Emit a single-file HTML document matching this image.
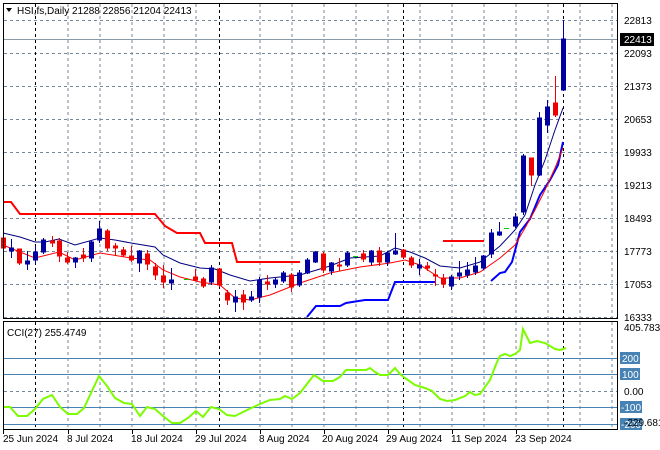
<!DOCTYPE html>
<html><head><meta charset="utf-8"><style>
body{margin:0;background:#fff;}
svg{display:block;font-family:"Liberation Sans",sans-serif;font-size:10px;}
</style></head><body>
<svg width="660" height="450" xmlns="http://www.w3.org/2000/svg">
<rect width="660" height="450" fill="#fff"/>
<g stroke="#778899" stroke-dasharray="3,3" stroke-width="1">
<line x1="68" y1="4" x2="68" y2="429"/><line x1="100" y1="4" x2="100" y2="429"/><line x1="132" y1="4" x2="132" y2="429"/><line x1="164" y1="4" x2="164" y2="429"/><line x1="196" y1="4" x2="196" y2="429"/><line x1="260" y1="4" x2="260" y2="429"/><line x1="292" y1="4" x2="292" y2="429"/><line x1="324" y1="4" x2="324" y2="429"/><line x1="356" y1="4" x2="356" y2="429"/><line x1="388" y1="4" x2="388" y2="429"/><line x1="420" y1="4" x2="420" y2="429"/><line x1="452" y1="4" x2="452" y2="429"/><line x1="484" y1="4" x2="484" y2="429"/><line x1="516" y1="4" x2="516" y2="429"/><line x1="548" y1="4" x2="548" y2="429"/><line x1="580" y1="4" x2="580" y2="429"/><line x1="612" y1="4" x2="612" y2="429"/>
<line x1="4" y1="20.5" x2="617" y2="20.5"/><line x1="4" y1="53.5" x2="617" y2="53.5"/><line x1="4" y1="86.5" x2="617" y2="86.5"/><line x1="4" y1="119.5" x2="617" y2="119.5"/><line x1="4" y1="152.5" x2="617" y2="152.5"/><line x1="4" y1="185.5" x2="617" y2="185.5"/><line x1="4" y1="218.5" x2="617" y2="218.5"/><line x1="4" y1="251.5" x2="617" y2="251.5"/><line x1="4" y1="284.5" x2="617" y2="284.5"/><line x1="4" y1="317.5" x2="617" y2="317.5"/>
<line x1="4" y1="391.5" x2="617" y2="391.5"/>
</g>
<g stroke="#000" stroke-dasharray="3,3" stroke-width="1">
<line x1="35.5" y1="4" x2="35.5" y2="429"/><line x1="219.5" y1="4" x2="219.5" y2="429"/><line x1="403.5" y1="4" x2="403.5" y2="429"/><line x1="563.5" y1="4" x2="563.5" y2="429"/>
</g>
<line x1="4" y1="39.5" x2="617" y2="39.5" stroke="#8a9aa8"/>
<g stroke="#4682b4" stroke-width="1">
<line x1="4" y1="358.5" x2="617" y2="358.5"/><line x1="4" y1="374.5" x2="617" y2="374.5"/><line x1="4" y1="407.5" x2="617" y2="407.5"/><line x1="4" y1="424.5" x2="617" y2="424.5"/>
</g>
<!-- step lines -->
<polyline fill="none" stroke="#f00" stroke-width="2" points="3,202 11,202 20,214 155,214 165,226 177,233 200,233 205,243 232,243 237,262 300,262"/>
<line x1="443" y1="241" x2="484" y2="241" stroke="#f00" stroke-width="2"/>
<polyline fill="none" stroke="#00f" stroke-width="2" points="307,317 316,306 340,306 346,303 365,300 388,300 395,282 435,282"/>
<polyline fill="none" stroke="#00f" stroke-width="2" points="491,281 500,273 505,272 512,262 520,232 530,219 540,195 550,180 558,165 563,142"/>
<!-- MAs -->
<polyline fill="none" stroke="#000080" stroke-width="1" points="3,233 20,237 35,242 45,242 59,239 75,245 100,238 115,240 131,243 155,247 163,255 180,263 200,268 215,269 230,275 250,281 270,278 300,275 330,266 350,258 380,256 395,248 410,252 425,258 440,266 460,268 480,262 500,246 515,230 525,215 535,185 545,160 555,130 563,108"/>
<polyline fill="none" stroke="#f00" stroke-width="1" points="3,245 20,252 35,258 59,252 75,260 100,253 131,258 150,260 163,270 180,277 200,282 220,285 235,298 250,300 270,295 300,283 330,273 360,267 390,263 405,260 420,265 440,278 460,278 480,272 500,258 515,245 525,228 535,210 545,190 555,168 563,148"/>
<!-- candles -->
<g id="c" stroke-width="1">
<g fill="#e00" stroke="#e00">
<rect x="1.5" y="238" width="4" height="10"/><line x1="19.5" y1="249" x2="19.5" y2="265"/><rect x="17.5" y="249" width="4" height="14"/>
<line x1="52.5" y1="236" x2="52.5" y2="247"/><rect x="50.5" y="241" width="4" height="2"/>
<line x1="59.5" y1="238" x2="59.5" y2="262"/><rect x="57.5" y="241" width="4" height="15"/>
<line x1="67.5" y1="252" x2="67.5" y2="264"/><rect x="65.5" y="258" width="4" height="4"/>
<line x1="83.5" y1="248" x2="83.5" y2="262"/><rect x="81.5" y="255" width="4" height="3"/>
<line x1="107.5" y1="229" x2="107.5" y2="251"/><rect x="105.5" y="231" width="4" height="17"/>
<line x1="115.5" y1="243" x2="115.5" y2="256"/><rect x="113.5" y="246" width="4" height="2"/>
<line x1="123.5" y1="247" x2="123.5" y2="257"/><rect x="121.5" y="250" width="4" height="5"/>
<line x1="131.5" y1="246" x2="131.5" y2="262"/><rect x="129.5" y="256" width="4" height="4"/>
<line x1="147.5" y1="250" x2="147.5" y2="270"/><rect x="145.5" y="254" width="4" height="10"/>
<line x1="155.5" y1="263" x2="155.5" y2="280"/><rect x="153.5" y="267" width="4" height="8"/>
<line x1="163.5" y1="265" x2="163.5" y2="288"/><rect x="161.5" y="276" width="4" height="6"/>
<line x1="195.5" y1="269" x2="195.5" y2="281"/><rect x="193.5" y="277" width="4" height="3"/>
<line x1="203.5" y1="277" x2="203.5" y2="288"/><rect x="201.5" y="279" width="4" height="7"/>
<line x1="219.5" y1="269" x2="219.5" y2="287"/><rect x="217.5" y="269" width="4" height="16"/>
<line x1="227.5" y1="290" x2="227.5" y2="305"/><rect x="225.5" y="293" width="4" height="7"/>
<line x1="243.5" y1="290" x2="243.5" y2="310"/><rect x="241.5" y="295" width="4" height="7"/>
<line x1="267.5" y1="275" x2="267.5" y2="290"/><rect x="265.5" y="282" width="4" height="2"/>
<line x1="291.5" y1="273" x2="291.5" y2="292"/><rect x="289.5" y="275" width="4" height="12"/>
<line x1="323.5" y1="252" x2="323.5" y2="273"/><rect x="321.5" y="254" width="4" height="16"/>
<line x1="339.5" y1="258" x2="339.5" y2="271"/><rect x="337.5" y="265" width="4" height="1"/>
<line x1="363.5" y1="250" x2="363.5" y2="262"/><rect x="361.5" y="254" width="4" height="5"/>
<line x1="379.5" y1="247" x2="379.5" y2="266"/><rect x="377.5" y="251" width="4" height="11"/>
<line x1="403.5" y1="249" x2="403.5" y2="258"/><rect x="401.5" y="250" width="4" height="7"/>
<line x1="411.5" y1="256" x2="411.5" y2="268"/><rect x="409.5" y="258" width="4" height="7"/>
<line x1="427.5" y1="262" x2="427.5" y2="271"/><rect x="425.5" y="266" width="4" height="2"/>
<line x1="435.5" y1="269" x2="435.5" y2="286"/><rect x="433.5" y="275" width="4" height="1"/>
<line x1="443.5" y1="274" x2="443.5" y2="288"/><rect x="441.5" y="278" width="4" height="6"/>
<line x1="531.5" y1="158" x2="531.5" y2="186"/><rect x="529.5" y="158" width="4" height="17"/>
<line x1="555.5" y1="76" x2="555.5" y2="117"/><rect x="553.5" y="103" width="4" height="12"/>
</g>
<g fill="#0000a0" stroke="#0000a0">
<line x1="11.5" y1="239" x2="11.5" y2="258"/><rect x="9.5" y="248" width="4" height="3"/>
<line x1="27.5" y1="251" x2="27.5" y2="270"/><rect x="25.5" y="261" width="4" height="3"/>
<line x1="35.5" y1="246" x2="35.5" y2="264"/><rect x="33.5" y="252" width="4" height="8"/>
<line x1="43.5" y1="238" x2="43.5" y2="254"/><rect x="41.5" y="240" width="4" height="12"/>
<line x1="75.5" y1="257" x2="75.5" y2="268"/><rect x="73.5" y="258" width="4" height="4"/>
<line x1="91.5" y1="240" x2="91.5" y2="262"/><rect x="89.5" y="242" width="4" height="16"/>
<line x1="99.5" y1="221" x2="99.5" y2="243"/><rect x="97.5" y="229" width="4" height="11"/>
<line x1="139.5" y1="250" x2="139.5" y2="272"/><rect x="137.5" y="251" width="4" height="12"/>
<line x1="171.5" y1="268" x2="171.5" y2="290"/><rect x="169.5" y="280" width="4" height="3"/>
<line x1="211.5" y1="265" x2="211.5" y2="285"/><rect x="209.5" y="268" width="4" height="14"/>
<line x1="235.5" y1="290" x2="235.5" y2="312"/><rect x="233.5" y="297" width="4" height="5"/>
<line x1="251.5" y1="291" x2="251.5" y2="302"/><rect x="249.5" y="297" width="4" height="3"/>
<line x1="259.5" y1="277" x2="259.5" y2="303"/><rect x="257.5" y="280" width="4" height="17"/>
<line x1="275.5" y1="278" x2="275.5" y2="288"/><rect x="273.5" y="280" width="4" height="4"/>
<line x1="283.5" y1="271" x2="283.5" y2="283"/><rect x="281.5" y="273" width="4" height="8"/>
<line x1="299.5" y1="270" x2="299.5" y2="287"/><rect x="297.5" y="273" width="4" height="12"/>
<line x1="307.5" y1="258" x2="307.5" y2="274"/><rect x="305.5" y="260" width="4" height="13"/>
<line x1="315.5" y1="251" x2="315.5" y2="263"/><rect x="313.5" y="252" width="4" height="10"/>
<line x1="331.5" y1="262" x2="331.5" y2="275"/><rect x="329.5" y="263" width="4" height="8"/>
<line x1="347.5" y1="251" x2="347.5" y2="267"/><rect x="345.5" y="253" width="4" height="12"/>
<line x1="371.5" y1="250" x2="371.5" y2="265"/><rect x="369.5" y="251" width="4" height="11"/>
<line x1="387.5" y1="251" x2="387.5" y2="266"/><rect x="385.5" y="253" width="4" height="9"/>
<line x1="395.5" y1="233" x2="395.5" y2="255"/><rect x="393.5" y="251" width="4" height="3"/>
<line x1="419.5" y1="259" x2="419.5" y2="275"/><rect x="417.5" y="265" width="4" height="3"/>
<line x1="451.5" y1="275" x2="451.5" y2="290"/><rect x="449.5" y="277" width="4" height="9"/>
<line x1="459.5" y1="261" x2="459.5" y2="280"/><rect x="457.5" y="273" width="4" height="3"/>
<line x1="467.5" y1="262" x2="467.5" y2="278"/><rect x="465.5" y="270" width="4" height="5"/>
<line x1="475.5" y1="257" x2="475.5" y2="275"/><rect x="473.5" y="266" width="4" height="6"/>
<line x1="483.5" y1="255" x2="483.5" y2="270"/><rect x="481.5" y="256" width="4" height="12"/>
<line x1="491.5" y1="229" x2="491.5" y2="258"/><rect x="489.5" y="233" width="4" height="21"/>
<line x1="499.5" y1="222" x2="499.5" y2="236"/><rect x="497.5" y="232" width="4" height="3"/>
<line x1="515.5" y1="213" x2="515.5" y2="228"/><rect x="513.5" y="217" width="4" height="9"/>
<line x1="523.5" y1="154" x2="523.5" y2="215"/><rect x="521.5" y="156" width="4" height="56"/>
<line x1="539.5" y1="112" x2="539.5" y2="176"/><rect x="537.5" y="118" width="4" height="57"/>
<line x1="547.5" y1="100" x2="547.5" y2="133"/><rect x="545.5" y="107" width="4" height="18"/>
<line x1="563.5" y1="20" x2="563.5" y2="91"/><rect x="561.5" y="39" width="4" height="51"/>
</g>
<g stroke="#0c0"><line x1="184" y1="279.5" x2="189" y2="279.5"/><line x1="353" y1="256.5" x2="358" y2="256.5"/><line x1="504" y1="228.5" x2="509" y2="228.5"/></g>
</g>
<!-- CCI -->
<polyline fill="none" stroke="#7cfc00" stroke-width="2" points="3,407 10,407 18,416 27,416 35,409 43,399 52,395 60,407 68,414 77,414 84,408 99,376 107,386 115,398 124,403 132,404 140,416 147,407 155,409 163,416 172,423 180,423 188,418 196,411 203,417 211,407 219,409 227,415 235,416 245,411 260,404 270,400 280,399 285,396 292,399 300,393 314,375 323,381 333,381 340,377 346,370 358,370 366,370 370,368 375,372 380,375 388,375 395,368 400,374 405,378 415,385 425,388 432,391 440,399 447,401 455,400 465,396 470,392 475,395 480,394 490,380 497,362 500,356 505,354 510,356 515,354 520,350 523,329 530,343 537,341 545,343 555,349 560,350 566,348"/>
<!-- borders -->
<g stroke="#000" fill="none">
<rect x="3.5" y="3.5" width="614" height="315"/>
<rect x="3.5" y="321.5" width="614" height="108"/>
</g>
<!-- right axis -->
<g fill="#000">
<text x="624" y="24">22813</text><text x="624" y="57">22093</text><text x="624" y="90">21373</text><text x="624" y="123">20653</text><text x="624" y="156">19933</text><text x="624" y="189">19213</text><text x="624" y="222">18493</text><text x="624" y="255">17773</text><text x="624" y="288">17053</text><text x="624" y="321">16333</text>
</g>
<rect x="620" y="33" width="34" height="13" fill="#000"/><text x="624" y="43" fill="#fff">22413</text>
<text x="624" y="331">405.7837</text>
<rect x="620" y="352" width="20" height="12" fill="#4682b4"/><text x="622" y="362" fill="#fff">200</text>
<rect x="620" y="368" width="20" height="12" fill="#4682b4"/><text x="622" y="378" fill="#fff">100</text>
<text x="624" y="395">0.00</text>
<rect x="620" y="401" width="22" height="12" fill="#4682b4"/><text x="621" y="411" fill="#fff">-100</text>
<rect x="620" y="418" width="22" height="12" fill="#4682b4"/><text x="621" y="428" fill="#fff">-200</text>
<text x="624" y="426">-229.6815</text>
<!-- header -->
<path d="M6 8 L12 8 L9 12 Z" fill="#000"/>
<text x="17" y="14" fill="#000">HSI,fs,Daily  21288 22856 21204 22413</text>
<text x="7" y="336">CCI(27) 255.4749</text>
<!-- date axis -->
<g stroke="#000"><line x1="3.5" y1="430" x2="3.5" y2="434"/><line x1="68.5" y1="430" x2="68.5" y2="434"/><line x1="132.5" y1="430" x2="132.5" y2="434"/><line x1="196.5" y1="430" x2="196.5" y2="434"/><line x1="260.5" y1="430" x2="260.5" y2="434"/><line x1="324.5" y1="430" x2="324.5" y2="434"/><line x1="388.5" y1="430" x2="388.5" y2="434"/><line x1="452.5" y1="430" x2="452.5" y2="434"/><line x1="516.5" y1="430" x2="516.5" y2="434"/></g>
<g fill="#000"><text x="3" y="442">25 Jun 2024</text><text x="67" y="442">8 Jul 2024</text><text x="131" y="442">18 Jul 2024</text><text x="195" y="442">29 Jul 2024</text><text x="259" y="442">8 Aug 2024</text><text x="322" y="442">20 Aug 2024</text><text x="386" y="442">29 Aug 2024</text><text x="451" y="442">11 Sep 2024</text><text x="515" y="442">23 Sep 2024</text></g>
</svg>
</body></html>
